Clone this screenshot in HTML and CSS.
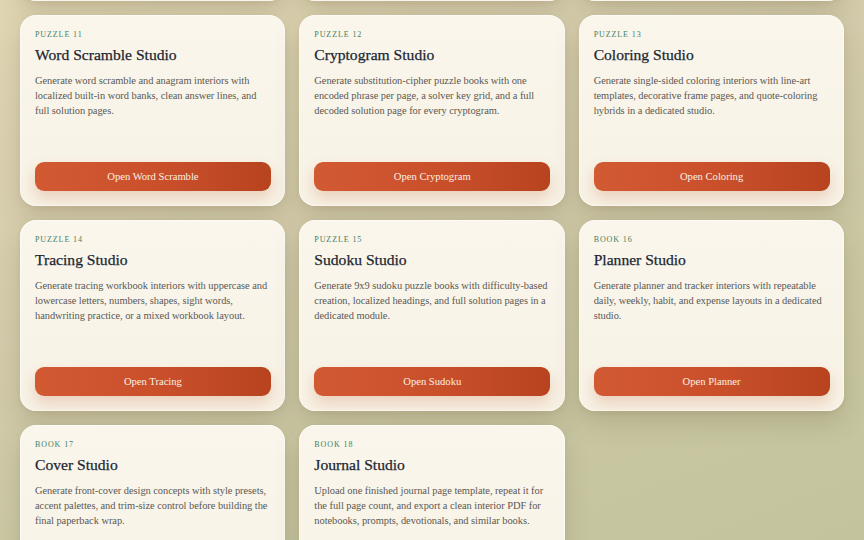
FILE: index.html
```html
<!DOCTYPE html>
<html lang="en">
<head>
<meta charset="utf-8">
<title>Studios</title>
<link rel="stylesheet" href="styles.css">
</head>
<body>
<main class="studios">
  <section class="studio-grid">
    <article class="studio-card">
      <p class="studio-kicker">Puzzle 8</p>
      <h2 class="studio-title">Word Search Studio</h2>
      <p class="studio-desc">Build word search interiors with themed word lists, adjustable grid sizes, and answer keys.</p>
      <a class="studio-btn" href="#">Open Word Search</a>
    </article>
    <article class="studio-card">
      <p class="studio-kicker">Puzzle 9</p>
      <h2 class="studio-title">Crossword Studio</h2>
      <p class="studio-desc">Assemble crossword interiors with clue sets, numbered grids, and solution pages.</p>
      <a class="studio-btn" href="#">Open Crossword</a>
    </article>
    <article class="studio-card">
      <p class="studio-kicker">Puzzle 10</p>
      <h2 class="studio-title">Maze Studio</h2>
      <p class="studio-desc">Generate maze interiors in several shapes and difficulty levels with solved paths.</p>
      <a class="studio-btn" href="#">Open Maze</a>
    </article>

    <article class="studio-card">
      <p class="studio-kicker">Puzzle 11</p>
      <h2 class="studio-title">Word Scramble Studio</h2>
      <p class="studio-desc">Generate word scramble and anagram interiors with localized built-in word banks, clean answer lines, and full solution pages.</p>
      <a class="studio-btn" href="#">Open Word Scramble</a>
    </article>
    <article class="studio-card">
      <p class="studio-kicker">Puzzle 12</p>
      <h2 class="studio-title">Cryptogram Studio</h2>
      <p class="studio-desc">Generate substitution-cipher puzzle books with one encoded phrase per page, a solver key grid, and a full decoded solution page for every cryptogram.</p>
      <a class="studio-btn" href="#">Open Cryptogram</a>
    </article>
    <article class="studio-card">
      <p class="studio-kicker">Puzzle 13</p>
      <h2 class="studio-title">Coloring Studio</h2>
      <p class="studio-desc">Generate single-sided coloring interiors with line-art templates, decorative frame pages, and quote-coloring hybrids in a dedicated studio.</p>
      <a class="studio-btn" href="#">Open Coloring</a>
    </article>

    <article class="studio-card">
      <p class="studio-kicker">Puzzle 14</p>
      <h2 class="studio-title">Tracing Studio</h2>
      <p class="studio-desc">Generate tracing workbook interiors with uppercase and lowercase letters, numbers, shapes, sight words, handwriting practice, or a mixed workbook layout.</p>
      <a class="studio-btn" href="#">Open Tracing</a>
    </article>
    <article class="studio-card">
      <p class="studio-kicker">Puzzle 15</p>
      <h2 class="studio-title">Sudoku Studio</h2>
      <p class="studio-desc">Generate 9x9 sudoku puzzle books with difficulty-based creation, localized headings, and full solution pages in a dedicated module.</p>
      <a class="studio-btn" href="#">Open Sudoku</a>
    </article>
    <article class="studio-card">
      <p class="studio-kicker">Book 16</p>
      <h2 class="studio-title">Planner Studio</h2>
      <p class="studio-desc">Generate planner and tracker interiors with repeatable daily, weekly, habit, and expense layouts in a dedicated studio.</p>
      <a class="studio-btn" href="#">Open Planner</a>
    </article>

    <article class="studio-card">
      <p class="studio-kicker">Book 17</p>
      <h2 class="studio-title">Cover Studio</h2>
      <p class="studio-desc">Generate front-cover design concepts with style presets, accent palettes, and trim-size control before building the final paperback wrap.</p>
      <a class="studio-btn" href="#">Open Cover</a>
    </article>
    <article class="studio-card">
      <p class="studio-kicker">Book 18</p>
      <h2 class="studio-title">Journal Studio</h2>
      <p class="studio-desc">Upload one finished journal page template, repeat it for the full page count, and export a clean interior PDF for notebooks, prompts, devotionals, and similar books.</p>
      <a class="studio-btn" href="#">Open Journal</a>
    </article>
  </section>
</main>
</body>
</html>
```
FILE: styles.css
```css
* { box-sizing: border-box; }

html, body {
  margin: 0;
  padding: 0;
}

body {
  min-height: 100vh;
  font-family: "Liberation Serif", "DejaVu Serif", serif;
  color: #1d2733;
  background: linear-gradient(160deg, #e0d6b4 0%, #d3cbab 40%, #c9c7a2 70%, #c3c49d 100%);
  background-attachment: fixed;
  overflow: hidden;
}

.studios {
  padding: 0 20px 40px;
}

.studio-grid {
  margin-top: -190px;
  display: grid;
  grid-template-columns: repeat(3, 1fr);
  grid-auto-rows: 191px;
  gap: 14px;
}

.studio-card {
  display: flex;
  flex-direction: column;
  padding: 14px 14.5px 15px 15px;
  border-radius: 16px;
  background: linear-gradient(180deg, #faf6ec 0%, #f7f2e5 100%);
  box-shadow:
    inset 0 0 0 1px rgba(255, 255, 255, 0.5),
    0 12px 26px rgba(96, 84, 48, 0.20),
    0 2px 5px rgba(96, 84, 48, 0.08);
}

.studio-kicker {
  margin: 0;
  font-size: 8px;
  line-height: 11px;
  letter-spacing: 0.9px;
  text-transform: uppercase;
  color: #427f5f;
}

.studio-title {
  margin: 5px 0 0;
  font-size: 15.6px;
  line-height: 20px;
  font-weight: 400;
  color: #1c2632;
  -webkit-text-stroke: 0.25px #1c2632;
}

.studio-desc {
  margin: 8px 0 0;
  font-size: 10.45px;
  line-height: 15px;
  letter-spacing: -0.05px;
  color: #5c5954;
}

.studio-btn {
  margin-top: auto;
  display: flex;
  align-items: center;
  justify-content: center;
  height: 29px;
  border-radius: 9px;
  background: linear-gradient(90deg, #d25a33 0%, #c94f2b 55%, #b8431f 100%);
  box-shadow: 0 7px 14px rgba(196, 86, 40, 0.22);
  color: #fcefe2;
  font-size: 10.6px;
  text-decoration: none;
}
```
